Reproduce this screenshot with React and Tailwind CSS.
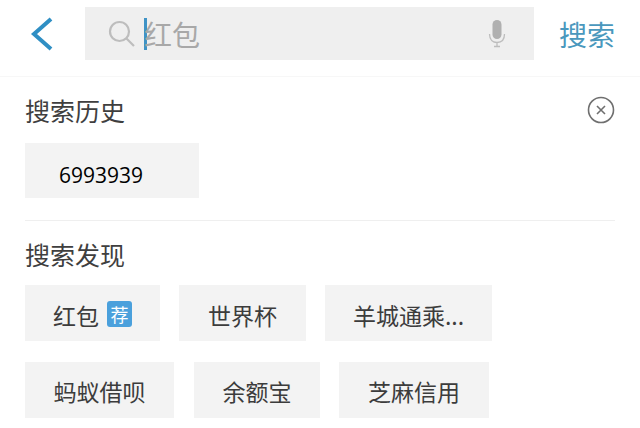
const cjk = { fontFamily: '"Noto Sans CJK SC", sans-serif' };

function Chip({ children, className = "" }) {
  return (
    <div className={`h-[56px] flex items-center justify-center bg-[#f3f3f3] text-[23px] leading-none text-[#3c3c3c] ${className}`}>
      {children}
    </div>
  );
}

export default function App() {
  return (
    <div className="w-[640px] h-[428px] overflow-hidden bg-white" style={cjk}>
      <header className="h-[77px] border-b border-[#f7f7f7] flex pt-[7px] items-start">
        <div className="w-[85px] h-[53px] flex items-center pl-[30px]">
          <svg width="24" height="34" viewBox="0 0 24 34" fill="none">
            <path d="M21 2 L4 17 L21 32" stroke="#2f8fc4" strokeWidth="4" />
          </svg>
        </div>
        <div className="w-[449px] h-[53px] bg-[#efefef] flex items-center pl-[23px] pr-[28px]">
          <svg width="28" height="28" viewBox="0 0 28 28" fill="none" className="shrink-0">
            <circle cx="11.5" cy="11.5" r="9.5" stroke="#bdbdbd" strokeWidth="2.2" />
            <path d="M18.5 18.5 L26 26" stroke="#bdbdbd" strokeWidth="2.2" />
          </svg>
          <div className="w-[3px] h-[32px] bg-[#3f93c6] ml-[8px] shrink-0" />
          <span className="text-[28px] leading-none text-[#a8a8a8] flex-1 ml-[-3px]">红包</span>
          <svg width="18" height="28" viewBox="0 0 18 28" fill="none" className="shrink-0">
            <rect x="4.5" y="0" width="9" height="19" rx="4.5" fill="#b0b0b0" />
            <path d="M1.5 14 C1.5 20 5 22.5 9 22.5 C13 22.5 16.5 20 16.5 14 M9 22.5 V26.5 M6 26.5 H12" stroke="#bdbdbd" strokeWidth="1.3" />
          </svg>
        </div>
        <div className="flex-1 h-[53px] flex items-center pl-[25px] text-[28px] leading-none text-[#4a98bd]">搜索</div>
      </header>

      <section className="px-[25px]">
        <div className="flex items-center justify-between h-[66px]">
          <h2 className="text-[25px] leading-none text-[#3f3f3f]">搜索历史</h2>
          <svg width="28" height="28" viewBox="0 0 28 28" fill="none">
            <circle cx="14" cy="14" r="12.5" stroke="#6f6f6f" strokeWidth="1.6" />
            <path d="M10 10 L18 18 M18 10 L10 18" stroke="#6f6f6f" strokeWidth="1.6" />
          </svg>
        </div>
        <div className="w-[174px] h-[55px] bg-[#f3f3f3] flex items-center pl-[34px] pt-[10px] text-[21px] leading-none text-black" style={{ fontFamily: '"Open Sans", sans-serif' }}>
          6993939
        </div>
        <div className="mt-[22px] h-px bg-[#efefef]" />
        <h2 className="text-[25px] leading-none text-[#3f3f3f] mt-[21px]">搜索发现</h2>
        <div className="mt-[18px] flex flex-col gap-[21px]">
          <div className="flex gap-[19px]">
            <Chip className="w-[135px] gap-[8px] pt-[5px]">
              <span>红包</span>
              <span className="w-[25px] h-[26px] mb-[4px] rounded-[3px] bg-[#4aa0dc] text-white text-[18px] leading-none flex items-center justify-center">荐</span>
            </Chip>
            <Chip className="w-[127px] pt-[5px]">世界杯</Chip>
            <Chip className="w-[167px] pt-[5px]">羊城通乘...</Chip>
          </div>
          <div className="flex gap-[20px]">
            <Chip className="w-[149px] pt-[3px]">蚂蚁借呗</Chip>
            <Chip className="w-[126px] pt-[3px] mr-[-1px]">余额宝</Chip>
            <Chip className="w-[150px] pt-[3px]">芝麻信用</Chip>
          </div>
        </div>
      </section>
    </div>
  );
}
